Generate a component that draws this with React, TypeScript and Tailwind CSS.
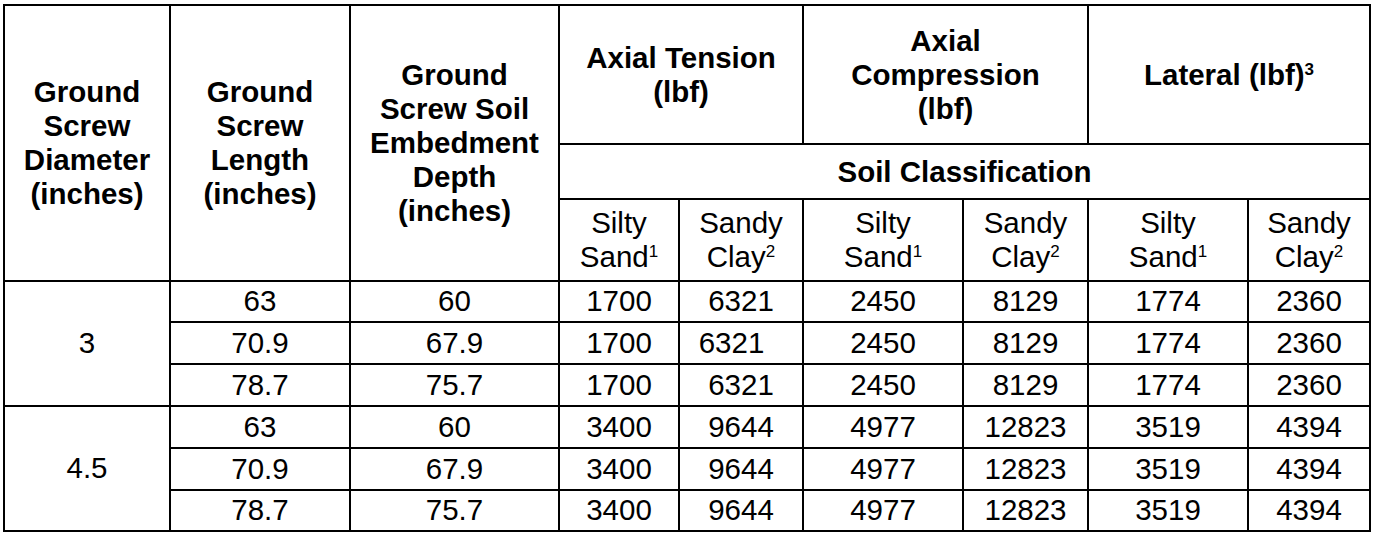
import React from "react";

const cell = "bg-white flex items-center justify-center text-center";
const hdr = cell + " font-bold leading-[34px]";

function Sup({ n }: { n: string }) {
  return (
    <span className="relative top-[-10px] text-[17px] leading-none align-baseline">
      {n}
    </span>
  );
}

const groups = [
  {
    d: "3",
    rows: [
      ["63", "60", "1700", "6321", "2450", "8129", "1774", "2360"],
      ["70.9", "67.9", "1700", "6321", "2450", "8129", "1774", "2360"],
      ["78.7", "75.7", "1700", "6321", "2450", "8129", "1774", "2360"],
    ],
  },
  {
    d: "4.5",
    rows: [
      ["63", "60", "3400", "9644", "4977", "12823", "3519", "4394"],
      ["70.9", "67.9", "3400", "9644", "4977", "12823", "3519", "4394"],
      ["78.7", "75.7", "3400", "9644", "4977", "12823", "3519", "4394"],
    ],
  },
];

export default function App() {
  return (
    <div className="w-[1375px] h-[535px] bg-white overflow-hidden font-['Liberation_Sans',Arial,sans-serif] text-black text-[29.5px]">
      <div className="ml-[3px] mt-[4px] inline-grid bg-black gap-[2px] p-[2px] grid-cols-[164px_178px_207px_118px_122px_158px_123px_158px_120px] grid-rows-[137px_53px_80px_39px_40px_40px_40px_40px_39px]">
        <div className={hdr + " row-span-3"}>
          <div>Ground<br />Screw<br />Diameter<br />(inches)</div>
        </div>
        <div className={hdr + " row-span-3"}>
          <div>Ground<br />Screw<br />Length<br />(inches)</div>
        </div>
        <div className={hdr + " row-span-3"}>
          <div>Ground<br />Screw Soil<br />Embedment<br />Depth<br />(inches)</div>
        </div>
        <div className={hdr + " col-span-2"}>
          <div>Axial Tension<br />(lbf)</div>
        </div>
        <div className={hdr + " col-span-2"}>
          <div>Axial<br />Compression<br />(lbf)</div>
        </div>
        <div className={hdr + " col-span-2"}>
          <div>Lateral (lbf)<Sup n="3" /></div>
        </div>
        <div className={hdr + " col-span-6"}>
          <div>Soil Classification</div>
        </div>
        {[0, 1, 2].map((i) => (
          <React.Fragment key={i}>
            <div className={cell + " leading-[34px]"}>
              <div>Silty<br />Sand<Sup n="1" /></div>
            </div>
            <div className={cell + " leading-[34px]"}>
              <div>Sandy<br />Clay<Sup n="2" /></div>
            </div>
          </React.Fragment>
        ))}
        {groups.map((g) => (
          <React.Fragment key={g.d}>
            <div className={cell + " row-span-3"}>{g.d}</div>
            {g.rows.map((r, ri) =>
              r.map((v, ci) => (
                <div
                  key={g.d + "-" + ri + "-" + ci}
                  className={
                    cell +
                    (g.d === "3" && ri === 1 && ci === 3 ? " pr-[19px]" : "")
                  }
                >
                  {v}
                </div>
              ))
            )}
          </React.Fragment>
        ))}
      </div>
    </div>
  );
}
